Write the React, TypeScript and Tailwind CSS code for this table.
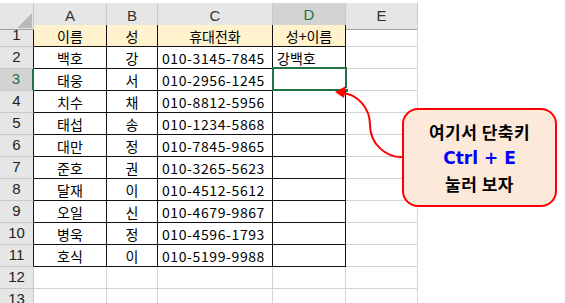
import React from 'react'

const rows: string[][] = [
  ['이름', '성', '휴대전화', '성+이름'],
  ['백호', '강', '010-3145-7845', '강백호'],
  ['태웅', '서', '010-2956-1245', ''],
  ['치수', '채', '010-8812-5956', ''],
  ['태섭', '송', '010-1234-5868', ''],
  ['대만', '정', '010-7845-9865', ''],
  ['준호', '권', '010-3265-5623', ''],
  ['달재', '이', '010-4512-5612', ''],
  ['오일', '신', '010-4679-9867', ''],
  ['병욱', '정', '010-4596-1793', ''],
  ['호식', '이', '010-5199-9988', ''],
  ['', '', '', ''],
  ['', '', '', ''],
]

const cols = ['A', 'B', 'C', 'D', 'E']

const App = () => {
  return (
    <div
      className="relative w-[565px] h-[303px] overflow-hidden bg-white pt-[3px]"
      style={{ fontFamily: '"Noto Sans CJK KR", "Noto Sans", sans-serif' }}
    >
      <div className="grid grid-cols-[34px_73px_51px_115px_73px_72px] auto-rows-[22px] w-[418px]">
        {/* column headers */}
        <div className="relative h-[27px] bg-[#e6e6e6] border-r border-b border-r-[#c8c8c8] border-b-[#9e9e9e]">
          <svg className="absolute left-0 top-0" width="34" height="27">
            <polygon points="32,10 32,25 17,25" fill="#b9b9b9" />
          </svg>
        </div>
        {cols.map((c) => (
          <div
            key={c}
            className={
              'h-[27px] flex items-center justify-center border-r border-b text-[15px] ' +
              (c === 'D'
                ? 'bg-[#d3d3d3] text-[#217346] border-r-[#c8c8c8] border-b-2 border-b-[#217346]'
                : c === 'E'
                ? 'bg-[#e6e6e6] text-[#333] border-r-[#c8c8c8] border-b-[#9e9e9e]'
                : 'bg-[#e6e6e6] text-[#333] border-r-[#c8c8c8] border-b-[#222]')
            }
            style={{ fontFamily: '"Liberation Sans", Arial, sans-serif' }}
          >
            {c}
          </div>
        ))}

        {rows.map((r, i) => {
          const n = i + 1
          const inTable = n <= 11
          const sel = n === 3
          return (
            <React.Fragment key={n}>
              <div
                className={
                  'flex items-center justify-center border-b text-[15px] ' +
                  (sel
                    ? 'bg-[#d3d3d3] text-[#217346] border-r-2 border-r-[#217346] border-b-[#c8c8c8]'
                    : inTable
                    ? 'bg-[#e6e6e6] text-[#222] border-r border-r-[#111] border-b-[#c8c8c8]'
                    : 'bg-[#e6e6e6] text-[#222] border-r border-r-[#c8c8c8] border-b-[#c8c8c8]')
                }
                style={{ fontFamily: '"Liberation Sans", Arial, sans-serif' }}
              >
                {n}
              </div>
              {r.map((v, j) => (
                <div
                  key={j}
                  className={
                    'relative flex items-center border-r border-b text-[14px] text-black leading-none ' +
                    (inTable ? 'border-r-[#111] border-b-[#111] ' : 'border-r-[#d4d4d4] border-b-[#d4d4d4] ') +
                    (n === 1 ? 'bg-[#fff2cc] justify-center ' : '') +
                    (n === 1
                      ? ''
                      : j === 2
                      ? 'justify-start pl-[4px] tracking-[0.6px] '
                      : j === 3
                      ? 'justify-start pl-[4px] '
                      : 'justify-center ')
                  }
                >
                  {v}
                  {sel && j === 3 && (
                    <div className="absolute left-[-1px] top-[-2px] w-[75px] h-[24px] border-2 border-[#217346]">
                      <div className="absolute right-[-4px] bottom-[-4px] w-[5px] h-[5px] bg-[#217346] border border-white" />
                    </div>
                  )}
                </div>
              ))}
              <div className="border-r border-b border-r-[#d4d4d4] border-b-[#d4d4d4]" />
            </React.Fragment>
          )
        })}
      </div>

      {/* arrow */}
      <svg className="absolute left-0 top-0 pointer-events-none" width="565" height="303">
        <path d="M404 157 A32 32 0 0 1 370 125 A30 32 0 0 0 342 93" fill="none" stroke="#ff0000" strokeWidth="2" />
        <polygon points="335,92 346,86 344,98" fill="#ff0000" />
      </svg>

      {/* callout */}
      <div className="absolute left-[402px] top-[108px] w-[155px] h-[99px] rounded-[16px] border-2 border-[#ff0000] bg-[#fde9d9] flex flex-col items-center justify-center font-bold text-[17px] leading-[26px] text-black">
        <div className="tracking-[0.5px]">여기서 단축키</div>
        <div className="text-[#0000ff]" style={{ fontFamily: '"DejaVu Sans", sans-serif' }}>
          Ctrl + E
        </div>
        <div className="tracking-[0.5px]">눌러 보자</div>
      </div>
    </div>
  )
}

export default App
